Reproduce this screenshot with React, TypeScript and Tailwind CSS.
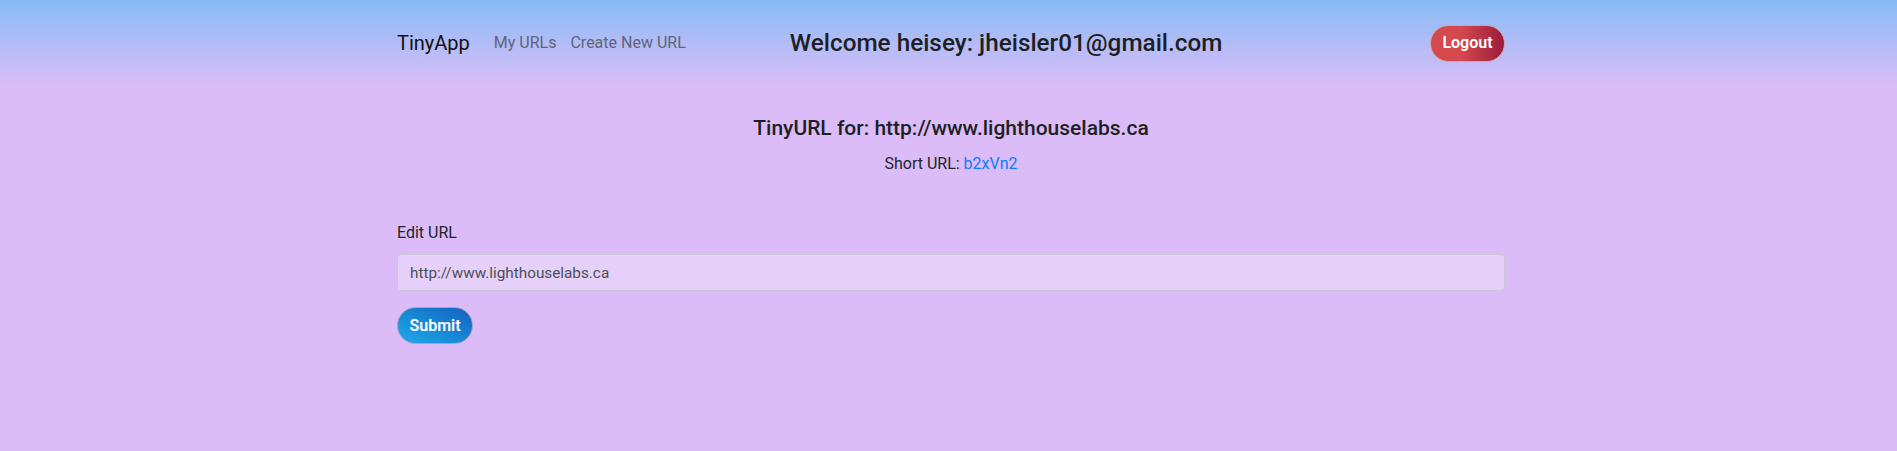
import React from "react";

const font = { fontFamily: "Roboto, Inter, 'Noto Sans', sans-serif" };

const App = () => {
  return (
    <div className="min-h-[451px] bg-[#dbbcf8] pl-[5px] text-[#212529]" style={font}>
      <nav className="-ml-[5px] h-[88px] bg-gradient-to-b from-[#85bbf6] to-[#dbbcf8] pl-[5px]">
        <div className="mx-auto flex h-full w-[1108px] items-center pb-[2px]">
          <a className="mr-[24px] text-[20px] leading-[30px] text-[#111]">TinyApp</a>
          <a className="mr-[14px] text-[16px] text-[#5f6577]">My URLs</a>
          <a className="text-[16px] text-[#5f6577]">Create New URL</a>
          <h4 className="ml-[104px] text-[24.3px] font-medium leading-[30px] text-[#1e1f24]">
            Welcome heisey: jheisler01@gmail.com
          </h4>
          <button className="ml-auto h-[37px] w-[75px] rounded-full border border-[#c9a8a8] bg-gradient-to-r from-[#d5484e] from-40% to-[#9a1b3c] text-[16px] font-semibold text-white">
            Logout
          </button>
        </div>
      </nav>
      <main className="mx-auto w-[1108px]">
        <div className="flex flex-col items-center">
          <h3 className="mt-[26px] text-[21px] font-medium leading-[28px] text-[#1e1f24]">
            TinyURL for: http://www.lighthouselabs.ca
          </h3>
          <p className="mt-[10px] text-[16px] leading-[24px]">
            Short URL: <a className="text-[#0a7bff]">b2xVn2</a>
          </p>
        </div>
        <form className="mt-[45px] flex flex-col">
          <label className="text-[16px] leading-[24px]">Edit URL</label>
          <input
            className="mt-[9px] h-[37px] w-full rounded-[4px] border border-[#cbc6d6] bg-[#e6d0f9] px-[12px] text-[15.3px] text-[#495057] outline-none"
            defaultValue="http://www.lighthouselabs.ca"
            style={font}
          />
          <button className="mt-[16px] h-[37px] w-[76px] rounded-full border border-[#a7a1c4] bg-gradient-to-tr from-[#20abe8] to-[#1561c0] text-[16px] font-semibold text-white">
            Submit
          </button>
        </form>
      </main>
    </div>
  );
};

export default App;
